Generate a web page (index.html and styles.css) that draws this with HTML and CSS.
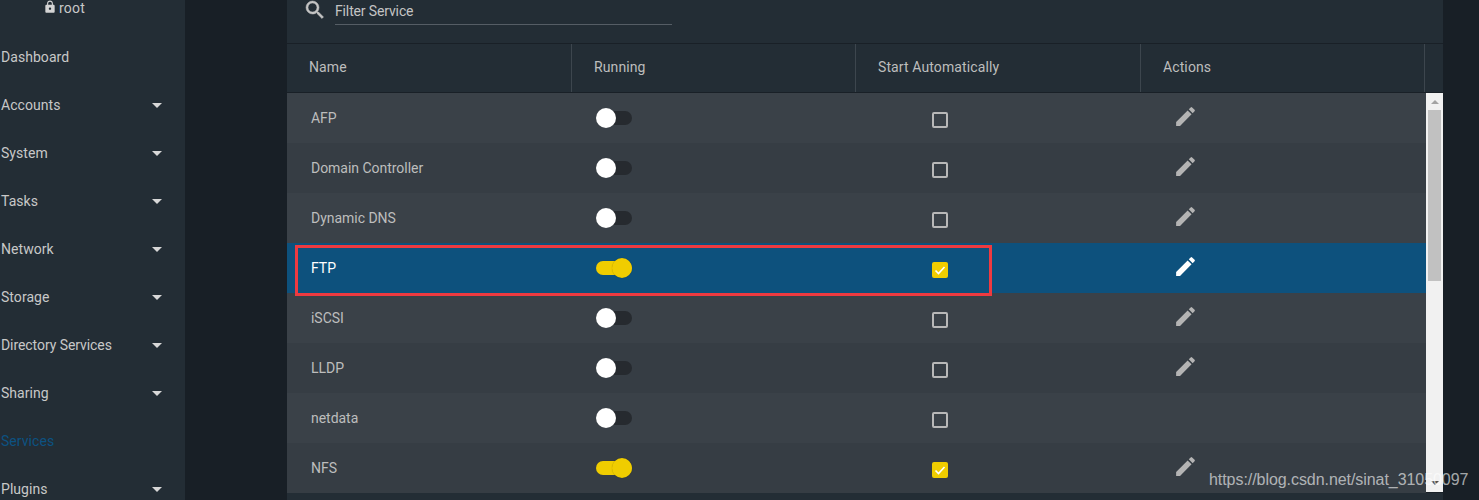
FILE: index.html
```html
<!DOCTYPE html>
<html lang="en">
<head>
<meta charset="utf-8">
<title>Services</title>
<link rel="stylesheet" href="styles.css">
</head>
<body>
<aside class="sidebar">
  <div class="user">
    <svg class="lock" viewBox="0 0 24 24"><path d="M18 8h-1V6c0-2.76-2.24-5-5-5S7 3.24 7 6v2H6c-1.1 0-2 .9-2 2v10c0 1.1.9 2 2 2h12c1.1 0 2-.9 2-2V10c0-1.1-.9-2-2-2zm-6 9c-1.1 0-2-.9-2-2s.9-2 2-2 2 .9 2 2-.9 2-2 2zm3.1-9H8.9V6c0-1.71 1.39-3.1 3.1-3.1 1.71 0 3.1 1.39 3.1 3.1v2z"/></svg>
    <span>root</span>
  </div>
  <nav class="nav">
    <div class="nav-item">Dashboard</div>
    <div class="nav-item">Accounts<i class="caret"></i></div>
    <div class="nav-item">System<i class="caret"></i></div>
    <div class="nav-item">Tasks<i class="caret"></i></div>
    <div class="nav-item">Network<i class="caret"></i></div>
    <div class="nav-item">Storage<i class="caret"></i></div>
    <div class="nav-item"><span class="tight">Directory Services</span><i class="caret"></i></div>
    <div class="nav-item">Sharing<i class="caret"></i></div>
    <div class="nav-item active">Services</div>
    <div class="nav-item">Plugins<i class="caret"></i></div>
  </nav>
</aside>
<main class="card">
  <div class="filter">
    <svg class="search" viewBox="0 0 24 24"><path d="M15.5 14h-.79l-.28-.27A6.471 6.471 0 0016 9.5 6.5 6.5 0 109.5 16c1.61 0 3.09-.59 4.23-1.57l.27.28v.79l5 4.99L20.49 19l-4.99-5zm-6 0C7.01 14 5 11.99 5 9.5S7.01 5 9.5 5 14 7.01 14 9.5 11.99 14 9.5 14z"/></svg>
    <div class="filter-input">Filter Service</div>
  </div>
  <div class="head">
    <div class="th">Name</div>
    <div class="th">Running</div>
    <div class="th">Start Automatically</div>
    <div class="th">Actions</div>
  </div>
  <div class="body">
    <div class="rows">
      <div class="row">
        <div class="name">AFP</div>
        <div class="run"><span class="toggle"><i class="knob"></i></span></div>
        <div class="auto"><span class="check"></span></div>
        <div class="act"><svg class="pencil" viewBox="0 0 24 24"><path d="M3 17.25V21h3.75L17.81 9.94l-3.75-3.75L3 17.25zM20.71 7.04a1 1 0 000-1.41l-2.34-2.34a1 1 0 00-1.41 0l-1.83 1.83 3.75 3.75 1.83-1.83z"/></svg></div>
      </div>
      <div class="row">
        <div class="name">Domain Controller</div>
        <div class="run"><span class="toggle"><i class="knob"></i></span></div>
        <div class="auto"><span class="check"></span></div>
        <div class="act"><svg class="pencil" viewBox="0 0 24 24"><path d="M3 17.25V21h3.75L17.81 9.94l-3.75-3.75L3 17.25zM20.71 7.04a1 1 0 000-1.41l-2.34-2.34a1 1 0 00-1.41 0l-1.83 1.83 3.75 3.75 1.83-1.83z"/></svg></div>
      </div>
      <div class="row">
        <div class="name">Dynamic DNS</div>
        <div class="run"><span class="toggle"><i class="knob"></i></span></div>
        <div class="auto"><span class="check"></span></div>
        <div class="act"><svg class="pencil" viewBox="0 0 24 24"><path d="M3 17.25V21h3.75L17.81 9.94l-3.75-3.75L3 17.25zM20.71 7.04a1 1 0 000-1.41l-2.34-2.34a1 1 0 00-1.41 0l-1.83 1.83 3.75 3.75 1.83-1.83z"/></svg></div>
      </div>
      <div class="row selected">
        <div class="name">FTP</div>
        <div class="run"><span class="toggle on"><i class="knob"></i></span></div>
        <div class="auto"><span class="check on"><svg class="tick" viewBox="0 0 16 16"><path d="M3.5 8.5l3 3 6-6.5"/></svg></span></div>
        <div class="act"><svg class="pencil" viewBox="0 0 24 24"><path d="M3 17.25V21h3.75L17.81 9.94l-3.75-3.75L3 17.25zM20.71 7.04a1 1 0 000-1.41l-2.34-2.34a1 1 0 00-1.41 0l-1.83 1.83 3.75 3.75 1.83-1.83z"/></svg></div>
      </div>
      <div class="row">
        <div class="name">iSCSI</div>
        <div class="run"><span class="toggle"><i class="knob"></i></span></div>
        <div class="auto"><span class="check"></span></div>
        <div class="act"><svg class="pencil" viewBox="0 0 24 24"><path d="M3 17.25V21h3.75L17.81 9.94l-3.75-3.75L3 17.25zM20.71 7.04a1 1 0 000-1.41l-2.34-2.34a1 1 0 00-1.41 0l-1.83 1.83 3.75 3.75 1.83-1.83z"/></svg></div>
      </div>
      <div class="row">
        <div class="name">LLDP</div>
        <div class="run"><span class="toggle"><i class="knob"></i></span></div>
        <div class="auto"><span class="check"></span></div>
        <div class="act"><svg class="pencil" viewBox="0 0 24 24"><path d="M3 17.25V21h3.75L17.81 9.94l-3.75-3.75L3 17.25zM20.71 7.04a1 1 0 000-1.41l-2.34-2.34a1 1 0 00-1.41 0l-1.83 1.83 3.75 3.75 1.83-1.83z"/></svg></div>
      </div>
      <div class="row">
        <div class="name">netdata</div>
        <div class="run"><span class="toggle"><i class="knob"></i></span></div>
        <div class="auto"><span class="check"></span></div>
        <div class="act"></div>
      </div>
      <div class="row">
        <div class="name">NFS</div>
        <div class="run"><span class="toggle on"><i class="knob"></i></span></div>
        <div class="auto"><span class="check on"><svg class="tick" viewBox="0 0 16 16"><path d="M3.5 8.5l3 3 6-6.5"/></svg></span></div>
        <div class="act"><svg class="pencil" viewBox="0 0 24 24"><path d="M3 17.25V21h3.75L17.81 9.94l-3.75-3.75L3 17.25zM20.71 7.04a1 1 0 000-1.41l-2.34-2.34a1 1 0 00-1.41 0l-1.83 1.83 3.75 3.75 1.83-1.83z"/></svg></div>
      </div>
    </div>
    <div class="scrollbar">
      <i class="arrow up"></i>
      <div class="thumb"></div>
      <i class="arrow down"></i>
    </div>
  </div>
</main>
<div class="highlight"></div>
<div class="watermark">https://blog.csdn.net/sinat_31050097</div>
</body>
</html>
```
FILE: styles.css
```css
* { box-sizing: border-box; }
html, body { margin: 0; height: 500px; overflow: hidden; }
body {
  display: flex;
  background: #181f26;
  font-family: Roboto, "Liberation Sans", sans-serif;
  font-size: 14px;
  color: #c4c4c4;
}
.sidebar { width: 185px; height: 500px; flex: none; background: #232d35; overflow: hidden; }
.user { height: 33px; display: flex; align-items: flex-start; padding-left: 43px; font-size: 14px; }
.user span { margin-left: 2px; line-height: 16px; color: #c8c8c8; letter-spacing: .2px; }
.lock { width: 14px; height: 14px; fill: #d4d4d4; display: block; }
.nav-item {
  height: 48px;
  display: flex;
  align-items: center;
  justify-content: space-between;
  padding: 0 23px 0 1px;
  color: #c8c8c8;
  letter-spacing: .05px;
}
.nav-item .tight { letter-spacing: -.07px; }
.nav-item.active { color: #0c5282; }
.caret { width: 0; height: 0; border-left: 5px solid transparent; border-right: 5px solid transparent; border-top: 5px solid #d8d8d8; }
.card { width: 1156px; height: 500px; margin-left: 102px; flex: none; background: #232d35; }
.filter { height: 44px; display: flex; align-items: flex-start; padding-left: 16px; border-bottom: 1px solid #192027; }
.search { width: 24px; height: 24px; margin-top: -2px; fill: #c4c4c4; stroke: #c4c4c4; stroke-width: .5; flex: none; }
.filter-input { width: 337px; height: 25px; margin-left: 8px; border-bottom: 1px solid #555d65; line-height: 22px; font-size: 14px; letter-spacing: -.14px; color: #c4c4c4; }
.head { height: 49px; display: flex; border-bottom: 1px solid #192027; }
.th { height: 48px; display: flex; align-items: center; padding: 0 0 2px 22px; border-right: 1px solid #3d464e; color: #bdbdbd; letter-spacing: .11px; }
.th:nth-child(1) { width: 285px; }
.th:nth-child(2) { width: 284px; }
.th:nth-child(3) { width: 285px; }
.th:nth-child(4) { width: 284px; }
.body { height: 400px; display: flex; border-bottom: 1px solid #192027; }
.rows { width: 1139px; flex: none; }
.row { height: 50px; display: flex; background: #3a4148; color: #bdbdbd; }
.row:nth-child(even) { background: #363d44; }
.row.selected { background: #0d517d; color: #fff; }
.name { width: 285px; padding-left: 24px; line-height: 50px; letter-spacing: -.03px; }
.run { width: 284px; padding-left: 24px; display: flex; align-items: center; }
.auto { width: 285px; padding: 19px 0 0 76px; }
.act { width: 285px; padding: 11px 0 0 31.5px; }
.toggle { display: block; position: relative; width: 36px; height: 14px; border-radius: 7px; background: #262a2f; }
.toggle.on { background: #f0cd00; }
.knob { position: absolute; left: 0; top: -3px; width: 20px; height: 20px; border-radius: 50%; background: #fff; }
.toggle.on .knob { left: 16px; background: #f0cd00; box-shadow: 0 0 1px rgba(0,0,0,.35); }
.check { display: block; width: 16px; height: 16px; border: 2px solid #b8b8b8; border-radius: 2px; }
.check.on { border: 0; background: #f0cd00; }
.tick { display: block; width: 16px; height: 16px; fill: none; stroke: #fff; stroke-width: 1.6; }
.pencil { display: block; width: 25px; height: 25px; fill: #b4b4b4; }
.selected .pencil { fill: #fff; }
.scrollbar { width: 17px; flex: none; background: #f1f1f1; display: flex; flex-direction: column; align-items: center; padding-top: 7px; }
.arrow { width: 0; height: 0; border-left: 4px solid transparent; border-right: 4px solid transparent; }
.arrow.up { border-bottom: 4px solid #a3a3a3; }
.arrow.down { border-top: 4px solid #505050; margin-top: auto; margin-bottom: 7px; }
.thumb { width: 13px; height: 171px; margin-top: 6px; background: #c1c1c1; }
.highlight { position: absolute; left: 295px; top: 245px; width: 697px; height: 51px; border: 3px solid #ee3a40; pointer-events: none; }
.watermark { position: absolute; left: 1209px; top: 471px; font-family: "Liberation Sans", Arial, sans-serif; font-size: 16px; letter-spacing: -.06px; line-height: 18px; color: rgba(255,255,255,.62); white-space: nowrap; }
```
